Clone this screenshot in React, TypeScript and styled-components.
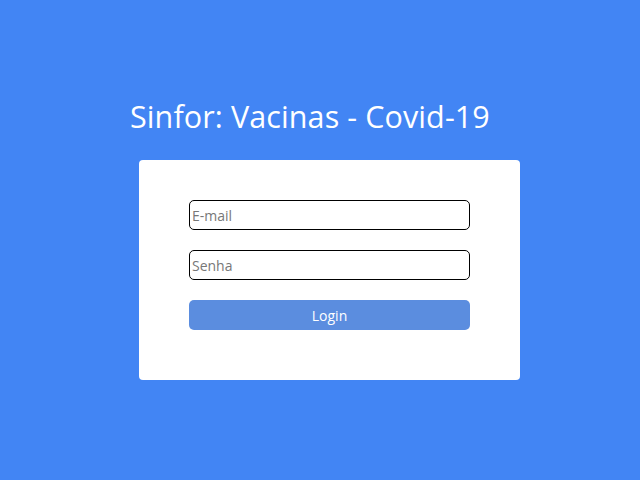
import React from "react";
import styled, { createGlobalStyle } from "styled-components";

const Global = createGlobalStyle`
  html, body { margin: 0; padding: 0; }
  body {
    background: #4285f4;
    font-family: "Open Sans", "Noto Sans", sans-serif;
  }
`;

const Page = styled.div`
  width: 640px;
  height: 480px;
  background: #4285f4;
  display: flex;
  flex-direction: column;
  align-items: flex-start;
  padding-top: 94px;
  box-sizing: border-box;
`;

const Title = styled.h1`
  margin: 0 0 0 130px;
  height: 66px;
  font-family: "Open Sans", sans-serif;
  font-weight: 400;
  font-size: 30.5px;
  line-height: 44px;
  color: #ffffff;
  letter-spacing: 0.1px;
`;

const Card = styled.form`
  margin-left: 139px;
  width: 381px;
  box-sizing: border-box;
  padding: 40px 50px 50px;
  background: #ffffff;
  border-radius: 4px;
  display: flex;
  flex-direction: column;
  gap: 20px;
`;

const Input = styled.input`
  height: 30px;
  box-sizing: border-box;
  border: 1px solid #000;
  border-radius: 5px;
  padding: 0 2px;
  font-family: "Open Sans", sans-serif;
  font-size: 14px;
  background: #fff;
  outline: none;
  &::placeholder { color: #777; }
`;

const Button = styled.button`
  height: 30px;
  border: none;
  border-radius: 5px;
  background: #5b8ddf;
  color: #fff;
  font-family: "Open Sans", sans-serif;
  font-size: 14px;
  cursor: pointer;
`;

export default function App() {
  return (
    <>
      <Global />
      <Page>
        <Title>Sinfor: Vacinas - Covid-19</Title>
        <Card onSubmit={(e) => e.preventDefault()}>
          <Input type="email" placeholder="E-mail" />
          <Input type="password" placeholder="Senha" />
          <Button type="submit">Login</Button>
        </Card>
      </Page>
    </>
  );
}
